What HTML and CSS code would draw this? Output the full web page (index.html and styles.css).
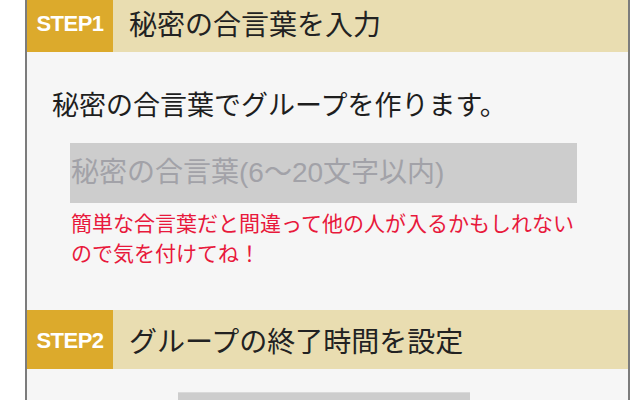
FILE: index.html
```html
<!DOCTYPE html>
<html lang="ja">
<head>
<meta charset="utf-8">
<title>グループ作成</title>
<link rel="stylesheet" href="styles.css">
</head>
<body>
<main class="panel">
  <section class="step">
    <div class="step-head">
      <span class="step-label">STEP1</span>
      <h2 class="step-title">秘密の合言葉を入力</h2>
    </div>
    <div class="step-body step-body-first">
      <p class="lead">秘密の合言葉でグループを作ります。</p>
      <input class="field" type="text" placeholder="秘密の合言葉(6〜20文字以内)">
      <p class="note">簡単な合言葉だと間違って他の人が入るかもしれない<br>ので気を付けてね！</p>
    </div>
  </section>
  <section class="step">
    <div class="step-head">
      <span class="step-label">STEP2</span>
      <h2 class="step-title">グループの終了時間を設定</h2>
    </div>
    <div class="step-body step-body-second">
      <div class="select"></div>
    </div>
  </section>
</main>
</body>
</html>
```
FILE: styles.css
```css
html, body {
  margin: 0;
  padding: 0;
  background: #ffffff;
  overflow: hidden;
}

body {
  font-family: "Liberation Sans", "Noto Sans CJK JP", sans-serif;
  color: #222222;
}

.panel {
  margin: -7px 0 0 25px;
  width: 601px;
  min-height: 420px;
  background: #f6f6f6;
  border-left: 2px solid #7c7c7c;
  border-right: 2px solid #7c7c7c;
}

.step-head {
  display: flex;
  align-items: stretch;
  height: 59px;
  background: #e9ddb1;
}

.step-label {
  width: 86px;
  display: flex;
  align-items: center;
  justify-content: center;
  background: #dcaa2c;
  color: #ffffff;
  font-family: "Liberation Sans", sans-serif;
  font-weight: bold;
  font-size: 22px;
  letter-spacing: -0.5px;
  padding-top: 3px;
  box-sizing: border-box;
}

.step-title {
  margin: 0;
  padding-left: 16px;
  display: flex;
  align-items: center;
  font-weight: normal;
  font-size: 28px;
  color: #222222;
  font-family: "Noto Sans CJK JP", sans-serif;
}

.step-body-first {
  padding: 33px 0 43px 25px;
}

.lead {
  margin: 0;
  font-size: 27px;
  line-height: 38px;
  font-family: "Noto Sans CJK JP", sans-serif;
  color: #1e1e1e;
}

.field {
  display: block;
  margin: 20px 0 0 18px;
  width: 507px;
  height: 60px;
  box-sizing: border-box;
  border: none;
  background: #cdcdcd;
  padding: 0 0 0 1px;
  font-family: "Liberation Sans", "Noto Sans CJK JP", sans-serif;
  font-size: 28px;
  color: #333333;
  outline: none;
}

.field::placeholder {
  color: #a2a2a8;
}

.note {
  margin: 4px 0 0 19px;
  font-size: 21px;
  line-height: 30px;
  color: #e8193c;
  font-family: "Noto Sans CJK JP", sans-serif;
}

.step-body-second {
  padding: 23px 0 0 0;
  display: flex;
  justify-content: center;
}

.select {
  width: 292px;
  height: 40px;
  margin-right: 7px;
  background: #cdcdcd;
  border-top: 1px solid #dadada;
}
```
